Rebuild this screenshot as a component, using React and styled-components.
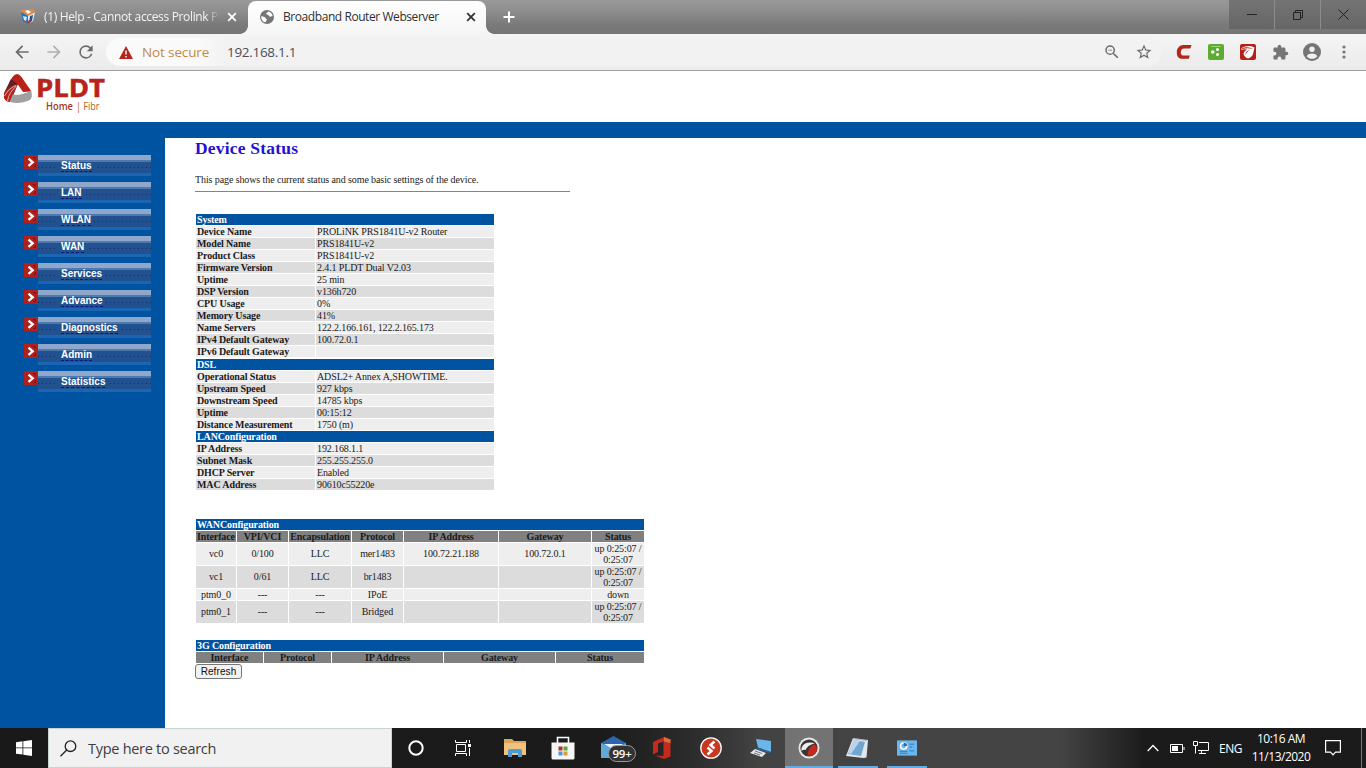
import React from 'react'
import styled, { createGlobalStyle } from 'styled-components'

const GlobalStyle = createGlobalStyle`
  * {
    box-sizing: border-box;
  }

  body {
    margin: 0;
    overflow: hidden;
    background: #fff;
  }

  svg {
    display: block;
    flex: none;
  }
`

const ui = '"Open Sans", "Noto Sans", sans-serif'

const Screen = styled.div`
  display: flex;
  flex-direction: column;
  width: 1366px;
  height: 768px;
  overflow: hidden;
`

/* browser */

const TabStrip = styled.div`
  display: flex;
  height: 34px;
  background: linear-gradient(#999 0%, #8f8f8f 30%, #7b7b7b 70%, #747474 100%);
  font-family: ${ui};
  font-size: 12px;
`

const Tab = styled.div`
  position: relative;
  display: flex;
  align-items: center;
  width: ${(p) => (p.$active ? '238px' : '248px')};
  height: ${(p) => (p.$active ? '33px' : '34px')};
  margin-top: ${(p) => (p.$active ? '1px' : '0')};
  padding-left: ${(p) => (p.$active ? '12px' : '20px')};
  padding-bottom: ${(p) => (p.$active ? '2px' : '1px')};
  border-radius: 8px 8px 0 0;
  background: ${(p) => (p.$active ? 'linear-gradient(#fff, #f5f5f5)' : 'transparent')};
  color: ${(p) => (p.$active ? '#303030' : '#f4f4f4')};

  &::before,
  &::after {
    content: '';
    display: ${(p) => (p.$active ? 'block' : 'none')};
    position: absolute;
    bottom: 0;
    width: 8px;
    height: 8px;
  }

  &::before {
    left: -8px;
    background: radial-gradient(circle at 0 0, transparent 7.5px, #f5f5f5 8px);
  }

  &::after {
    right: -8px;
    background: radial-gradient(circle at 100% 0, transparent 7.5px, #f5f5f5 8px);
  }
`

const TabTitle = styled.span`
  width: ${(p) => p.$w}px;
  margin-left: ${(p) => p.$ml}px;
  white-space: nowrap;
  letter-spacing: ${(p) => p.$ls}px;
  ${(p) => p.$fade && 'mask-image: linear-gradient(90deg, #000 93%, transparent 101%);'}
`

const CloseButton = styled.span`
  margin-left: ${(p) => p.$ml}px;
`

const NewTab = styled.div`
  display: flex;
  align-items: center;
  padding-left: 17px;
`

const WindowButtons = styled.div`
  display: flex;
  height: 29px;
  margin-left: auto;
  background: linear-gradient(#747474, #666);
`

const WindowButton = styled.div`
  display: flex;
  align-items: center;
  justify-content: center;
  width: ${(p) => p.$w}px;
  border-left: ${(p) => (p.$line ? '1px solid #8c8c8c' : 'none')};
`

const Toolbar = styled.div`
  display: flex;
  align-items: center;
  height: 37px;
  background: linear-gradient(#f4f4f4, #ebebeb);
  border-bottom: 1px solid #a0a0a0;
  font-family: ${ui};
`

const NavIcons = styled.div`
  display: flex;
  gap: 12px;
  padding-left: 12px;
`

const AddressBar = styled.div`
  display: flex;
  align-items: center;
  width: 1056px;
  height: 28px;
  margin-left: 10px;
  padding: 0 9px 0 13px;
  border-radius: 14px;
  background: linear-gradient(90deg, #fafafa 0, #fafafa 90px, #f2f2f2 120px);
`

const NotSecure = styled.span`
  width: 69px;
  margin-left: 9px;
  font-size: 13.5px;
  letter-spacing: -0.13px;
  color: #c08a4a;
  white-space: nowrap;
`

const Url = styled.span`
  flex: 1;
  margin-left: 16px;
  font-size: 13.5px;
  letter-spacing: -0.3px;
  color: #4c4f55;
`

const AddressActions = styled.div`
  display: flex;
  gap: 14px;
`

const Extensions = styled.div`
  display: grid;
  grid-template-columns: repeat(6, 32px);
  align-items: center;
  justify-items: center;
  margin-left: 6px;
`

/* router page */

const Page = styled.div`
  display: flex;
  flex-direction: column;
  height: 657px;
  font-family: 'Liberation Serif', serif;
  font-size: 10px;
  color: #1a1a1a;
`

const PageHeader = styled.header`
  height: 67px;
  padding-left: 3px;
  border-bottom: 16px solid #0053a1;
`

const PageBody = styled.div`
  display: flex;
  flex: 1;
`

const Sidebar = styled.nav`
  display: flex;
  flex-direction: column;
  gap: 6px;
  width: 165px;
  padding: 17px 0 0 24px;
  background: #0053a1;
`

const MenuItem = styled.div`
  display: flex;
  align-items: flex-start;
  height: 21px;
`

const MenuBar = styled.div`
  width: 113px;
  height: 21px;
  padding: 5px 0 0 20px;
  background:
    linear-gradient(90deg, #122c74 1px, transparent 1px) 4px 12px / 4px 1px repeat-x,
    linear-gradient(#8fa7ca 0 5px, #4d79ad 5px 7px, #21528f 7px 18px, #1b66b3 18px 21px);
`

const MenuLabel = styled.span`
  display: inline-block;
  height: 13px;
  padding: 0 3px;
  background: linear-gradient(transparent 2px, #21528f 2px);
  font: bold 10px/12px 'Liberation Sans', sans-serif;
  color: #fff;
`

const MenuLink = styled.span`
  display: block;
  height: 12px;
  border-bottom: 1px dashed #14147c;
`

const Content = styled.main`
  display: flex;
  flex-direction: column;
  align-items: flex-start;
  padding-left: 30px;
`

const Title = styled.h1`
  margin: 0;
  font-size: 17.5px;
  line-height: 20px;
  letter-spacing: 0.2px;
  color: #2212d0;
`

const Intro = styled.p`
  width: 375px;
  height: 20px;
  margin: 14px 0 22px;
  padding-top: 2px;
  border-bottom: 1px solid #848484;
  line-height: 12px;
  letter-spacing: -0.1px;
  white-space: nowrap;
`

const Table = styled.div`
  display: grid;
  grid-template-columns: ${(p) => p.$cols};
  gap: 1px;
  width: ${(p) => p.$w}px;
  margin: 0 0 ${(p) => p.$mb || 0}px 1px;
  line-height: 11px;
  letter-spacing: -0.12px;
`

const Caption = styled.div`
  grid-column: 1 / -1;
  height: 11px;
  margin-top: ${(p) => p.$mt || 0}px;
  padding-left: 1px;
  background: #0053a1;
  font-weight: bold;
  color: #fff;
`

const Cell = styled.div`
  display: flex;
  align-items: center;
  justify-content: ${(p) => (p.$center ? 'center' : 'flex-start')};
  min-height: 11px;
  padding-left: ${(p) => (p.$center ? 0 : 1)}px;
  padding-bottom: ${(p) => (p.$tall ? 1 : 0)}px;
  background: ${(p) => (p.$head ? '#808080' : p.$dark ? '#dcdcdc' : '#eee')};
  font-weight: ${(p) => (p.$head || p.$bold ? 'bold' : 'normal')};
  text-align: center;
  white-space: pre;
`

const RefreshButton = styled.button`
  width: 47px;
  height: 15px;
  margin-top: 1px;
  padding: 0;
  border: 1px solid #767676;
  border-radius: 3px;
  background: #f2f2f2;
  font: 10px/12px 'Liberation Sans', sans-serif;
  letter-spacing: 0.1px;
  color: #111;
`

/* taskbar */

const Taskbar = styled.footer`
  display: flex;
  height: 40px;
  background: linear-gradient(90deg, #191919 0, #1b1b1b 600px, #2b2b2b 690px, #434343 760px, #444 1060px, #1b1b1b 1145px);
  font-family: ${ui};
  color: #fff;
`

const Slot = styled.div`
  display: flex;
  align-items: center;
  justify-content: center;
  width: ${(p) => p.$w || 49}px;
  padding-top: ${(p) => (p.$bar ? 2 : 0)}px;
  padding-right: ${(p) => p.$pr || 0}px;
  border-bottom: ${(p) => (p.$bar ? '2px solid #62abe4' : 'none')};
  margin-right: ${(p) => p.$mr || 0}px;
  background: ${(p) => (p.$active ? '#737373' : 'transparent')};
`

const SearchBox = styled.div`
  display: flex;
  align-items: center;
  gap: 11px;
  width: 344px;
  padding-left: 11px;
  border: 1px solid #c9d4d2;
  background: #f1f1f1;
  font-size: 14.5px;
  letter-spacing: -0.28px;
  color: #3b3f42;
`

const MailIcon = styled.div`
  position: relative;
  width: 34px;
  height: 26px;
  margin-left: 5px;
`

const Badge = styled.span`
  position: absolute;
  left: 7px;
  top: 10px;
  width: 28px;
  height: 17px;
  border: 1px solid #999;
  border-radius: 9px;
  background: #333;
  font-size: 11.5px;
  font-weight: 600;
  line-height: 15px;
  text-align: center;
  letter-spacing: -0.3px;
`

const Tray = styled.div`
  display: flex;
  align-items: center;
  width: 220px;
  margin-left: auto;
`

const TrayIcon = styled.span`
  margin-left: ${(p) => p.$ml}px;
`

const Lang = styled.span`
  width: 24px;
  margin-left: 9px;
  font-size: 12px;
  letter-spacing: -0.5px;
`

const Clock = styled.div`
  width: 62px;
  margin-left: 7px;
  font-size: 12px;
  line-height: 18px;
  letter-spacing: -0.5px;
  text-align: center;
  white-space: nowrap;
`

const ShowDesktop = styled.div`
  width: 5px;
  height: 40px;
  margin-left: auto;
  border-left: 1px solid #777;
`

const menu = ['Status', 'LAN', 'WLAN', 'WAN', 'Services', 'Advance', 'Diagnostics', 'Admin', 'Statistics']

const status = [
  {
    title: 'System',
    rows: [
      ['Device Name', 'PROLiNK PRS1841U-v2 Router'],
      ['Model Name', 'PRS1841U-v2'],
      ['Product Class', 'PRS1841U-v2'],
      ['Firmware Version', '2.4.1 PLDT Dual V2.03'],
      ['Uptime', '25 min'],
      ['DSP Version', 'v136h720'],
      ['CPU Usage', '0%'],
      ['Memory Usage', '41%'],
      ['Name Servers', '122.2.166.161, 122.2.165.173'],
      ['IPv4 Default Gateway', '100.72.0.1'],
      ['IPv6 Default Gateway', ''],
    ],
  },
  {
    title: 'DSL',
    gap: 1,
    rows: [
      ['Operational Status', 'ADSL2+ Annex A,SHOWTIME.'],
      ['Upstream Speed', '927 kbps'],
      ['Downstream Speed', '14785 kbps'],
      ['Uptime', '00:15:12'],
      ['Distance Measurement', '1750 (m)'],
    ],
  },
  {
    title: 'LANConfiguration',
    rows: [
      ['IP Address', '192.168.1.1'],
      ['Subnet Mask', '255.255.255.0'],
      ['DHCP Server', 'Enabled'],
      ['MAC Address', '90610c55220e'],
    ],
  },
]

const wanHead = ['Interface', 'VPI/VCI', 'Encapsulation', 'Protocol', 'IP Address', 'Gateway', 'Status']
const up = 'up 0:25:07 /\n0:25:07'
const wan = [
  ['vc0', '0/100', 'LLC', 'mer1483', '100.72.21.188', '100.72.0.1', up],
  ['vc1', '0/61', 'LLC', 'br1483', '', '', up],
  ['ptm0_0', '---', '---', 'IPoE', '', '', 'down'],
  ['ptm0_1', '---', '---', 'Bridged', '', '', up],
]

const mobileHead = ['Interface', 'Protocol', 'IP Address', 'Gateway', 'Status']

function Close({ color, ml }) {
  return (
    <CloseButton $ml={ml}>
      <svg width="10" height="10" viewBox="0 0 10 10">
        <path d="M1.2 1.2l7.6 7.6M8.8 1.2L1.2 8.8" stroke={color} strokeWidth="1.8" />
      </svg>
    </CloseButton>
  )
}

function Browser() {
  return (
    <>
      <TabStrip>
        <Tab>
          <svg width="16" height="17" viewBox="0 0 16 17">
            <path d="M1 4l7 3v9l-5-3z" fill="#2d72b8" />
            <path d="M15 4L8 7v9l5-3z" fill="#e8eef5" />
            <path d="M10 8l3-1-1 6-3 2z" fill="#1756a0" />
            <path d="M0 3l5-2 3 2 4-3 4 4-8 4z" fill="#d98a4d" />
            <path d="M5 3l3-1 3 2-3 2z" fill="#fff" />
            <path d="M3 8l4 1-1 4-2-1z" fill="#d8e8f6" />
            <path d="M8 13l3-2-1 4-2 1z" fill="#b83628" />
          </svg>
          <TabTitle $w={174} $ml={8} $ls={-0.34} $fade>(1) Help - Cannot access Prolink P</TabTitle>
          <Close color="#fff" ml={9} />
        </Tab>
        <Tab $active>
          <svg width="14" height="14" viewBox="0 0 14 14">
            <circle cx="7" cy="7" r="7" fill="#757575" />
            <path d="M1.2 6.2c2 .1 3.6.6 4.3 1.7.4.9 1.5.7 1.3 1.8-.2 1-1 1-1 2.5C3 12 .9 9.6 1.2 6.2z" fill="#fff" />
            <path d="M8 1.4c-.3 1.5-1.6 1-1.8 2.2-.1 1 .9 1.2 1.7 1.1 1 0 .7 1.6 1.8 1.9 1.2.3 2.1-.4 2.9-.5C12.3 3.4 10.5 1.7 8 1.4z" fill="#fff" />
          </svg>
          <TabTitle $w={158} $ml={9} $ls={-0.43}>Broadband Router Webserver</TabTitle>
          <Close color="#333" ml={25} />
        </Tab>
        <NewTab>
          <svg width="12" height="12" viewBox="0 0 12 12">
            <path d="M6 .5v11M.5 6h11" stroke="#fff" strokeWidth="2" />
          </svg>
        </NewTab>
        <WindowButtons>
          <WindowButton $w={45}>
            <svg width="10" height="10"><path d="M0 4.5h10" stroke="#222" /></svg>
          </WindowButton>
          <WindowButton $w={46} $line>
            <svg width="10" height="10" fill="none" stroke="#222">
              <path d="M.5 2.5h7v7h-7zM2.5 2.5v-2h7v7h-2" />
            </svg>
          </WindowButton>
          <WindowButton $w={46} $line>
            <svg width="11" height="11"><path d="M.5.5l10 10M10.5.5l-10 10" stroke="#222" /></svg>
          </WindowButton>
        </WindowButtons>
      </TabStrip>
      <Toolbar>
        <NavIcons>
          <svg width="20" height="20" viewBox="0 0 24 24" fill="#6b6b6b">
            <path d="M20 11H7.83l5.59-5.59L12 4l-8 8 8 8 1.41-1.41L7.83 13H20v-2z" />
          </svg>
          <svg width="20" height="20" viewBox="0 0 24 24" fill="#b0b0b0">
            <path d="M12 4l-1.41 1.41L16.17 11H4v2h12.17l-5.58 5.59L12 20l8-8z" />
          </svg>
          <svg width="20" height="20" viewBox="0 0 24 24" fill="#6b6b6b">
            <path d="M17.65 6.35A7.96 7.96 0 0 0 12 4a8 8 0 1 0 7.73 10h-2.08A6 6 0 1 1 12 6c1.66 0 3.14.69 4.22 1.78L13 11h7V4z" />
          </svg>
        </NavIcons>
        <AddressBar>
          <svg width="14" height="13" viewBox="0 0 14 13">
            <path d="M7 0l7 13H0z" fill="#b3261a" />
            <path d="M7 4.5v4M7 10v1.5" stroke="#fff" strokeWidth="1.4" />
          </svg>
          <NotSecure>Not secure</NotSecure>
          <Url>192.168.1.1</Url>
          <AddressActions>
            <svg width="18" height="18" viewBox="0 0 24 24" fill="#6b6b6b">
              <path d="M15.5 14h-.79l-.28-.27A6.47 6.47 0 0 0 16 9.5 6.5 6.5 0 1 0 9.5 16c1.61 0 3.09-.59 4.23-1.57l.27.28v.79l5 4.99L20.49 19zm-6 0a4.5 4.5 0 1 1 0-9 4.5 4.5 0 0 1 0 9zM7 9h5v1H7z" />
            </svg>
            <svg width="18" height="18" viewBox="0 0 24 24" fill="#6b6b6b">
              <path d="M22 9.24l-7.19-.62L12 2 9.19 8.63 2 9.24l5.46 4.73L5.82 21 12 17.27 18.18 21l-1.63-7.03zM12 15.4l-3.76 2.27 1-4.28-3.32-2.88 4.38-.38L12 6.1l1.71 4.04 4.38.38-3.32 2.88 1 4.28z" />
            </svg>
          </AddressActions>
        </AddressBar>
        <Extensions>
          <svg width="16" height="16" viewBox="0 0 16 16">
            <path d="M15.5 1H7.5C3.500 1 .8 4.300 .8 8.300c0 4.200 1.700 6.500 5.200 6.500h6.800l1-3.200H8c-2.300 0-3.200-.9-3.200-3.100 0-2.600 1.200-4 3.500-4h6z" fill="#b3261a" />
          </svg>
          <svg width="16" height="16" viewBox="0 0 16 16">
            <rect width="16" height="16" rx="2" fill="#5cac32" />
            <path d="M3 2.5h10" stroke="#9bd070" />
            <g fill="#fff">
              <circle cx="4.8" cy="8" r="1.8" />
              <circle cx="9.5" cy="5.5" r="1.5" />
              <circle cx="9.5" cy="10.5" r="1.5" />
            </g>
          </svg>
          <svg width="16" height="16" viewBox="0 0 16 16">
            <rect width="16" height="16" rx="2" fill="#b3201a" />
            <path d="M1.5 4Q8 .5 14.500 3.500L13 10Q12 13 8 14.500 4 13 3.500 9.500 4 7 7 5.500 4 5 1.500 6z" fill="#fff" />
            <path d="M2 4.200Q8 2 13.500 5.200 8 3.500 2 5z" fill="#b3201a" />
            <path d="M5.500 10Q6 7 9.500 6 6.500 8.500 5.500 11z" fill="#b3201a" />
          </svg>
          <svg width="17" height="17" viewBox="0 0 24 24" fill="#757575">
            <path d="M20.5 11H19V7c0-1.100-.9-2-2-2h-4V3.500a2.500 2.500 0 0 0-5 0V5H4c-1.100 0-2 .9-2 2v3.800h1.500a2.700 2.700 0 0 1 0 5.400H2V20c0 1.100.9 2 2 2h3.800v-1.500a2.700 2.700 0 0 1 5.400 0V22H17c1.100 0 2-.9 2-2v-4h1.500a2.500 2.500 0 0 0 0-5z" />
          </svg>
          <svg width="18" height="18" viewBox="0 0 18 18">
            <circle cx="9" cy="9" r="9" fill="#757575" />
            <circle cx="9" cy="6.3" r="2.7" fill="#f0f0f0" />
            <path d="M3.6 13.2c1-2 3.6-2.7 5.4-2.7s4.4.7 5.4 2.7c-2.7 3.4-8.100 3.400-10.800 0z" fill="#f0f0f0" />
          </svg>
          <svg width="18" height="18" viewBox="0 0 18 18" fill="#757575">
            <circle cx="9" cy="4" r="1.6" />
            <circle cx="9" cy="9" r="1.6" />
            <circle cx="9" cy="14" r="1.6" />
          </svg>
        </Extensions>
      </Toolbar>
    </>
  )
}

function Logo() {
  return (
    <svg width="104" height="50" viewBox="0 -2 104 50">
      <path d="M9.5 4Q14-2 18.500 4L28.500 18.500 20 19 14.500 11 6 10z" fill="#bb2018" />
      <path d="M8 6L15 11.500 11 22 6 28Q0 28 1 20z" fill="#5e2226" />
      <path d="M2 18.500Q7 12 14.500 11.500L10 21.500 7 29Q2 29 1 24z" fill="#bb2018" />
      <path d="M1.500 23Q6 15 13 12.500M4.500 28Q6 19 13.500 13" fill="none" stroke="#d9c4c4" strokeWidth=".9" />
      <path d="M9.500 21.500Q20 22.500 28 17.500 30.500 25 26 27.500 17 31.500 7 29z" fill="#a0a0a0" />
      <path d="M14.600 12l6 8.500Q16 22 10.500 21.500z" fill="#fff" />
      <text x="33" y="24" fontFamily="Open Sans, sans-serif" fontWeight="700" fontSize="25" textLength="69" lengthAdjust="spacingAndGlyphs" fill="#b8241a" stroke="#b8241a" strokeWidth=".5">PLDT</text>
      <text x="43" y="37" fontFamily="Open Sans, sans-serif" fontWeight="600" fontSize="10" textLength="27" lengthAdjust="spacingAndGlyphs" fill="#a83a1c">Home</text>
      <text x="73" y="37" fontFamily="Open Sans, sans-serif" fontWeight="500" fontSize="10" textLength="23.5" lengthAdjust="spacingAndGlyphs" fill="#b8602a">| Fibr</text>
    </svg>
  )
}

function RouterPage() {
  return (
    <Page>
      <PageHeader>
        <Logo />
      </PageHeader>
      <PageBody>
        <Sidebar>
          {menu.map((name) => (
            <MenuItem key={name}>
              <svg width="14" height="14" viewBox="0 0 14 14">
                <path d="M0 0h14v14H0z" fill="#b0201c" />
                <path d="M9 2.5h2v2M11.5 9v2.5h-2" fill="none" stroke="#6e1420" />
                <path d="M4.5 3.7l4.2 3.6-4.2 3.6" fill="none" stroke="#fff" strokeWidth="2.3" />
              </svg>
              <MenuBar>
                <MenuLabel>
                  <MenuLink>{name}</MenuLink>
                </MenuLabel>
              </MenuBar>
            </MenuItem>
          ))}
        </Sidebar>
        <Content>
          <Title>Device Status</Title>
          <Intro>This page shows the current status and some basic settings of the device.</Intro>
          <Table $cols="119px 178px" $w={298} $mb={29}>
            {status.map((group) => (
              <React.Fragment key={group.title}>
                <Caption $mt={group.gap}>{group.title}</Caption>
                {group.rows.map(([label, value], i) => (
                  <React.Fragment key={label}>
                    <Cell $bold $dark={i % 2 === 1}>{label}</Cell>
                    <Cell $dark={i % 2 === 1}>{value}</Cell>
                  </React.Fragment>
                ))}
              </React.Fragment>
            ))}
          </Table>
          <Table $cols="40px 51px 62px 51px 94px 92px 52px" $w={448} $mb={17}>
            <Caption>WANConfiguration</Caption>
            {wanHead.map((h) => <Cell key={h} $head $center>{h}</Cell>)}
            {wan.map((row, i) => row.map((value, j) => (
              <Cell key={`${i}-${j}`} $center $dark={i % 2 === 1} $tall={row[6] === up && j < 6}>{value}</Cell>
            )))}
          </Table>
          <Table $cols="67px 67px 111px 111px 88px" $w={448}>
            <Caption>3G Configuration</Caption>
            {mobileHead.map((h) => <Cell key={h} $head $center>{h}</Cell>)}
          </Table>
          <RefreshButton>Refresh</RefreshButton>
        </Content>
      </PageBody>
    </Page>
  )
}

function WindowsTaskbar() {
  return (
    <Taskbar>
      <Slot $w={48}>
        <svg width="16" height="16" viewBox="0 0 16 16" fill="#fff">
          <path d="M0 2.2L6.5 1.3v6.2H0zM7.3 1.2L16 0v7.5H7.3zM0 8.3h6.5v6.3L0 13.7zM7.3 8.3H16V16l-8.7-1.2z" />
        </svg>
      </Slot>
      <SearchBox>
        <svg width="17" height="17" viewBox="0 0 17 17" fill="none" stroke="#222" strokeWidth="1.3">
          <circle cx="10.5" cy="6.2" r="5.3" />
          <path d="M6.7 10L.5 16.3" />
        </svg>
        Type here to search
      </SearchBox>
      <Slot $w={48}>
        <svg width="16" height="16"><circle cx="8" cy="8" r="6.7" fill="none" stroke="#fff" strokeWidth="2" /></svg>
      </Slot>
      <Slot $w={48} $pr={1}>
        <svg width="17" height="16" viewBox="0 0 17 16" fill="none" stroke="#fff">
          <path d="M.5 0v2.5h11V0M.5 16v-2.500h11V16M1.500 4.500h9v7h-9zM14.500 0v3M14.500 8v8" />
          <path d="M13 4h3v3h-3z" fill="#fff" stroke="none" />
        </svg>
      </Slot>
      <Slot $w={54}>
        <svg width="22" height="18" viewBox="0 0 22 18">
          <path d="M0 0h8l2 2h12v14H0z" fill="#d9a45c" />
          <path d="M0 4h22v12H0z" fill="#f0c27c" />
          <path d="M4 18v-6q0-2 2-2h10q2 0 2 2v6h-4v-4H8v4z" fill="#4a9bd6" />
        </svg>
      </Slot>
      <Slot $w={44} $pr={2}>
        <svg width="24" height="24" viewBox="0 0 24 24">
          <path d="M6.5 7V1.5h11V7" fill="none" stroke="#fff" strokeWidth="1.6" />
          <path d="M.5 6.5h23V22q0 1.500-1.500 1.500H2Q.5 23.500.5 22z" fill="#f6f6f6" />
          <path d="M7.500 10.500h4v4h-4z" fill="#b5301f" />
          <path d="M12.500 10.500h4v4h-4z" fill="#5da832" />
          <path d="M7.500 15.500h4v4h-4z" fill="#4a9bd6" />
          <path d="M12.500 15.500h4v4h-4z" fill="#dd9a3a" />
        </svg>
      </Slot>
      <Slot $w={59}>
        <MailIcon>
          <svg width="25" height="24" viewBox="0 0 25 24">
            <path d="M0 8L12.500 1 25 8v15H0z" fill="#2c66ae" />
            <path d="M3 9h19l-9.500 6z" fill="#eef5fb" />
            <path d="M0 8l12.500 6.500L25 8v15H0z" fill="#5fa9dd" />
          </svg>
          <Badge>99+</Badge>
        </MailIcon>
      </Slot>
      <Slot $w={33}>
        <svg width="19" height="22" viewBox="0 0 19 22">
          <path d="M12 0l6.500 2.500v17L12 22l-9-3.500 8.500 .5V4.500L6 6.500v8.500L1 17.500V5z" fill="#c42b1c" />
          <path d="M12 0l6.500 2.500V6L12 4.500z" fill="#d87040" />
        </svg>
      </Slot>
      <Slot $w={65}>
        <svg width="22" height="22" viewBox="0 0 22 22">
          <circle cx="11" cy="11" r="10.200" fill="#c8371f" stroke="#fff" strokeWidth="1.300" />
          <path d="M14.500 4.500l-4 3.500 4 3.500M7.500 10.500l4 3.500-4 3.500" fill="none" stroke="#fff" strokeWidth="2.400" />
        </svg>
      </Slot>
      <Slot $w={42} $pr={6}>
        <svg width="22" height="20" viewBox="0 0 22 20">
          <path d="M6 1l15 2v11L8 9.500z" fill="#6ab5ea" />
          <path d="M8 9.500L21 14l-2 1L6 11z" fill="#2e6396" />
          <path d="M5 11l11 4-4 4L0 15z" fill="#e3e8eb" />
          <path d="M5 13l7 2.500M4 15l6 2" stroke="#777" />
        </svg>
      </Slot>
      <Slot $w={48} $bar $active $mr={5}>
        <svg width="22" height="22" viewBox="0 0 22 22">
          <circle cx="11" cy="11" r="10.500" fill="#e6e6e6" />
          <circle cx="11" cy="11" r="8.600" fill="#3a3432" />
          <path d="M9.500 18.500Q9 12 16 7 20.500 10 18.500 15 15 19.500 9.500 18.500z" fill="#c42b1c" />
          <path d="M3.500 11Q6 4 17 6 9 8.500 7.500 13 5.500 12 3.500 14z" fill="#eee" />
        </svg>
      </Slot>
      <Slot $w={40} $bar $mr={9} $pr={1}>
        <svg width="23" height="22" viewBox="0 0 23 22">
          <path d="M7 1l15 2-1.500 17.500-3 .5L0 19z" fill="#dfe7ee" />
          <path d="M8 3l11 2-4 14L2 17z" fill="#72a6cf" />
          <path d="M8 3l6 1-9 13-3-1z" fill="#b9d4ea" />
          <path d="M7.500 1.500l13 2" stroke="#777" strokeDasharray="1 1" />
        </svg>
      </Slot>
      <Slot $w={40} $bar>
        <svg width="20" height="16" viewBox="0 0 21 16">
          <path d="M0 0h21v16H0z" fill="#6bb6ec" />
          <circle cx="7" cy="6" r="3.300" fill="none" stroke="#fff" strokeWidth="1.500" />
          <path d="M7 6V2.500A3.500 3.500 0 0 1 10.500 6z" fill="#2667a5" />
          <path d="M3 11.500h8M3 13.500h8M13 4h5M13 7h3M13 11h5" stroke="#2e78b8" />
        </svg>
      </Slot>
      <Tray>
        <TrayIcon $ml={1}>
          <svg width="12" height="8"><path d="M.7 7L6 1.500 11.300 7" fill="none" stroke="#fff" strokeWidth="1.300" /></svg>
        </TrayIcon>
        <TrayIcon $ml={11}>
          <svg width="15" height="9">
            <path d="M.5.5h12v8H.5zM14 3v3" fill="none" stroke="#fff" />
            <path d="M2 2h6v5H2z" fill="#fff" />
          </svg>
        </TrayIcon>
        <TrayIcon $ml={8}>
          <svg width="17" height="14" fill="none" stroke="#fff">
            <path d="M6 1.500h9.500v8H5M.5.5h4v4h-4zM2.500 4.500v8M8.500 9.500v3M6 12.500h7" />
          </svg>
        </TrayIcon>
        <Lang>ENG</Lang>
        <Clock>
          10:16 AM
          <br />
          11/13/2020
        </Clock>
        <TrayIcon $ml={13}>
          <svg width="16" height="16">
            <path d="M.6.6h14.800v11.500H10.500L8 14.800l-2.500-2.700H.6z" fill="none" stroke="#fff" strokeWidth="1.200" />
          </svg>
        </TrayIcon>
        <ShowDesktop />
      </Tray>
    </Taskbar>
  )
}

function App() {
  return (
    <Screen>
      <GlobalStyle />
      <Browser />
      <RouterPage />
      <WindowsTaskbar />
    </Screen>
  )
}

export default App
